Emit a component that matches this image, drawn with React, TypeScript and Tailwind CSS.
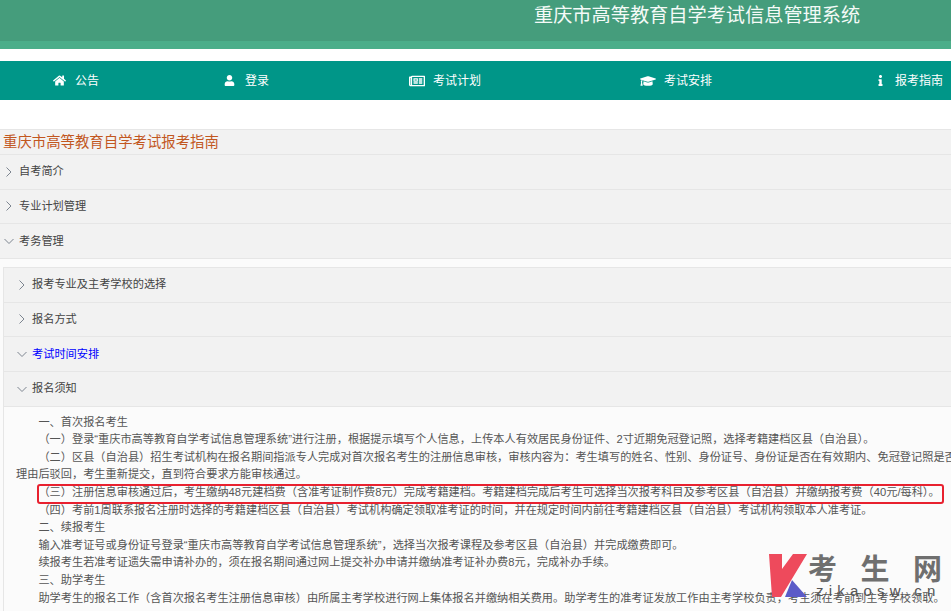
import { FaHome, FaUser, FaRegNewspaper, FaGraduationCap, FaInfo } from "react-icons/fa";

const navItems = [
  { label: "公告", Icon: FaHome, width: "w-[171px]", iconBox: "w-[22px]", size: 13 },
  { label: "登录", Icon: FaUser, width: "w-[185px]", iconBox: "w-[21px]", size: 11 },
  { label: "考试计划", Icon: FaRegNewspaper, width: "w-[231px]", iconBox: "w-[24px]", size: 16 },
  { label: "考试安排", Icon: FaGraduationCap, width: "w-[235px]", iconBox: "w-[24px]", size: 16 },
  { label: "报考指南", Icon: FaInfo, width: "w-[76px]", iconBox: "w-[20px]", size: 11 },
];

const Chevron = ({ open }: { open?: boolean }) => (
  <svg viewBox="0 0 12 12" className="w-3 h-3 shrink-0" fill="none" stroke="#7d8590" strokeWidth="1">
    {open ? <polyline points="1.5,4 6,8.5 10.5,4" /> : <polyline points="3.5,1.5 8,6 3.5,10.5" />}
  </svg>
);

const Row = ({ title, open, blue, inner }: { title: string; open?: boolean; blue?: boolean; inner?: boolean }) => (
  <div
    className={`flex items-center h-[34.67px] bg-[#f2f2f2] border-b border-[#e6e6e6] text-[11.2px] ${
      inner ? "pl-[12px] gap-[4px]" : "pl-[3px] gap-[4px]"
    } ${blue ? "text-[#0000ff]" : "text-[#444]"}`}
  >
    <Chevron open={open} />
    <span>{title}</span>
  </div>
);

const Line = ({ children, indent = true }: { children: React.ReactNode; indent?: boolean }) => (
  <p className={`whitespace-nowrap h-[17.6px] ${indent ? "pl-[22.4px]" : ""}`}>{children}</p>
);

export default function App() {
  return (
    <div
      className="relative w-[951px] h-[611px] overflow-hidden bg-white"
      style={{ fontFamily: '"Liberation Sans", "Noto Sans CJK SC", sans-serif' }}
    >
      <header>
        <div className="h-[41px] bg-[#459d7c] pl-[534px] pt-[3px] text-[19.2px] leading-[26px] text-[#f4faf7]">
          重庆市高等教育自学考试信息管理系统
        </div>
        <div className="h-[8px] bg-[#4bae8a]" />
      </header>

      <nav className="mt-[12px] h-[39px] bg-[#009688] flex items-center pl-[53px] text-[12px] text-white">
        {navItems.map(({ label, Icon, width, iconBox, size }) => (
          <div key={label} className={`flex items-center shrink-0 ${width}`}>
            <span className={`flex items-center ${iconBox}`}>
              <Icon size={size} />
            </span>
            <span>{label}</span>
          </div>
        ))}
      </nav>

      <main className="mt-[29px] border-t border-[#e6e6e6]">
        <h2 className="h-[25px] pl-[3px] bg-[#f2f2f2] border-b border-[#e6e6e6] text-[14.4px] leading-[24px] font-normal text-[#c2571f]">
          重庆市高等教育自学考试报考指南
        </h2>
        <Row title="自考简介" />
        <Row title="专业计划管理" />
        <Row title="考务管理" open />

        <div className="pl-[3px] pt-[8px] bg-[#fbfbfb]">
          <div className="border-l border-t border-[#e6e6e6]">
            <Row title="报考专业及主考学校的选择" inner />
            <Row title="报名方式" inner />
            <Row title="考试时间安排" open blue inner />
            <Row title="报名须知" open inner />
            <div className="relative pl-[12px] pt-[7px] text-[11.2px] leading-[17.6px] text-[#555] bg-[#fbfbfb] h-[300px]">
              <Line>一、首次报名考生</Line>
              <Line>（一）登录“重庆市高等教育自学考试信息管理系统”进行注册，根据提示填写个人信息，上传本人有效居民身份证件、2寸近期免冠登记照，选择考籍建档区县（自治县）。</Line>
              <Line>（二）区县（自治县）招生考试机构在报名期间指派专人完成对首次报名考生的注册信息审核，审核内容为：考生填写的姓名、性别、身份证号、身份证是否在有效期内、免冠登记照是否</Line>
              <Line indent={false}>理由后驳回，考生重新提交，直到符合要求方能审核通过。</Line>
              <Line>（三）注册信息审核通过后，考生缴纳48元建档费（含准考证制作费8元）完成考籍建档。考籍建档完成后考生可选择当次报考科目及参考区县（自治县）并缴纳报考费（40元/每科）。</Line>
              <Line>（四）考前1周联系报名注册时选择的考籍建档区县（自治县）考试机构确定领取准考证的时间，并在规定时间内前往考籍建档区县（自治县）考试机构领取本人准考证。</Line>
              <Line>二、续报考生</Line>
              <Line>输入准考证号或身份证号登录“重庆市高等教育自学考试信息管理系统”，选择当次报考课程及参考区县（自治县）并完成缴费即可。</Line>
              <Line>续报考生若准考证遗失需申请补办的，须在报名期间通过网上提交补办申请并缴纳准考证补办费8元，完成补办手续。</Line>
              <Line>三、助学考生</Line>
              <Line>助学考生的报名工作（含首次报名考生注册信息审核）由所属主考学校进行网上集体报名并缴纳相关费用。助学考生的准考证发放工作由主考学校负责，考生须在考前到主考学校领取。</Line>
              {/* red highlight box */}
              <div className="absolute left-[33px] top-[77px] w-[907px] h-[20px] border-2 border-[#e8212f] rounded-[3px]" />
            </div>
          </div>
        </div>
      </main>

      {/* watermark */}
      <div className="absolute left-[769px] top-[552px] w-[182px] h-[59px]">
        <svg viewBox="0 0 40 46" className="absolute left-0 top-[2px] w-[40px] h-[46px]">
          <polygon points="0,0 13,0 13,15 24,0 38,0 12,43 3,43" fill="#ee4a5c" />
          <polygon points="23,26 38,43 16,43" fill="#5b5bc8" />
        </svg>
        <div
          className="absolute left-[39px] top-[-4px] w-[134px] flex justify-between text-[29px] leading-[38px] font-bold text-[#6f6f6f]"
          style={{ fontFamily: '"Noto Sans CJK SC", sans-serif' }}
        >
          <span>考</span>
          <span>生</span>
          <span>网</span>
        </div>
        <div className="absolute left-[47px] top-[30px] text-[15px] leading-[18px] tracking-[5.2px] text-[#555]">zikaosw.cn</div>
      </div>
    </div>
  );
}
